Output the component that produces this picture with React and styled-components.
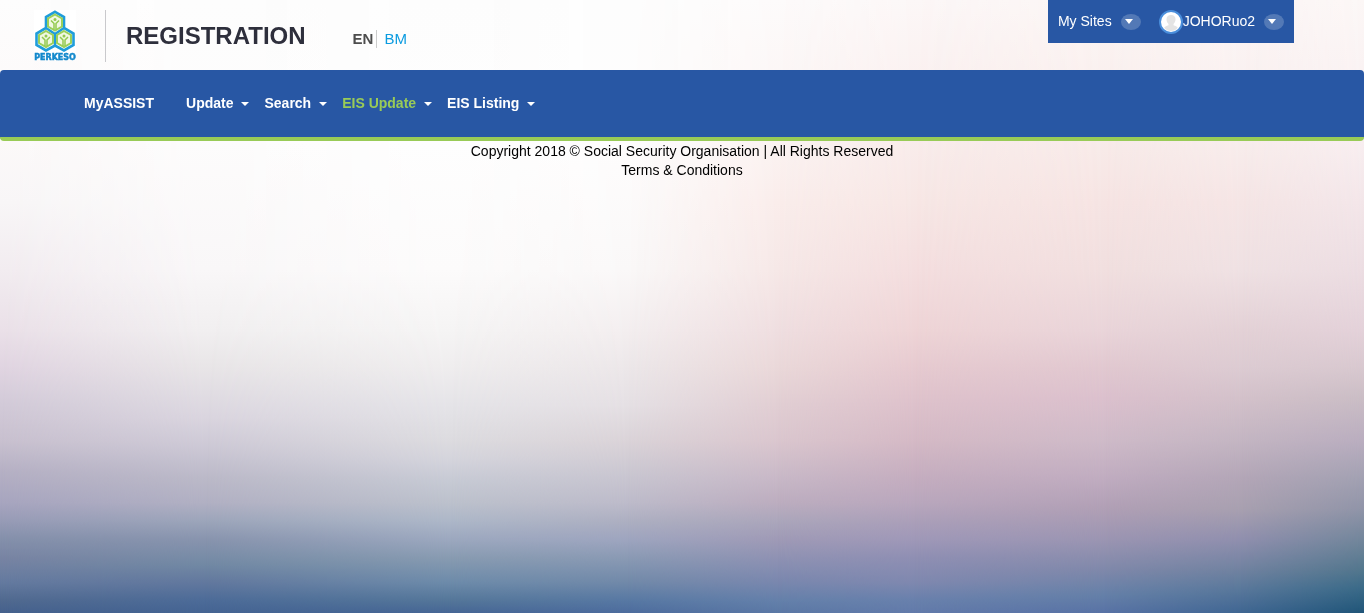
import React from "react";
import styled, { createGlobalStyle } from "styled-components";

const GlobalStyle = createGlobalStyle`
  *, *::before, *::after { box-sizing: border-box; }
  body {
    margin: 0;
    font-family: "Liberation Sans", Arial, sans-serif;
    font-size: 14px;
    line-height: 19px;
    color: #000;
  }
  a { color: inherit; text-decoration: none; }
  button {
    font: inherit;
    color: inherit;
    background: none;
    border: 0;
    padding: 0;
    cursor: pointer;
  }
`;

/* Vertical colour runs of the backdrop; each one fades in over the run to its left. */
const bands = [
  { from: 0, to: 0, stops: "#fdfdfd 0%, #fcf9f9 23%, #f8f6f7 33%, #f2ecf0 44%, #eae0e8 54%, #e0d4e1 60%, #d2cad8 66%, #c8c0cf 72%, #b5b0c4 77%, #a7a5bf 82%, #979bb6 85%, #8490ab 88%, #7884a3 91%, #647a9f 95%, #50698f 98%, #45618d 100%" },
  { from: 0, to: 15, stops: "#fdfdfd 0%, #fdfcfc 23%, #f9f7f8 44%, #f1eff0 54%, #e8e5e7 60%, #dad5df 68%, #ccc8d5 73%, #bbb9c8 78%, #b1b0c3 82%, #9ca5ba 85%, #8894ae 88%, #7289a4 92%, #62789e 95%, #4c6b98 98%, #456492 100%" },
  { from: 15, to: 33, stops: "#fdfdfd 0%, #fefefe 23%, #fcfbfb 44%, #f5f4f4 54%, #efedee 60%, #e5e4e8 66%, #dcdbdf 72%, #d4d4dc 75%, #c8cbd5 78%, #bcc1cc 82%, #adb7c8 85%, #9ca8bf 88%, #889bb1 91%, #6d8baa 95%, #547699 98%, #466695 100%" },
  { from: 33, to: 46, stops: "#fdfdfd 0%, #fefdfd 23%, #faf8f8 44%, #f3eeef 54%, #ece7e9 60%, #e5e0e4 66%, #dad3d8 72%, #c8c5d0 78%, #bdbbca 82%, #adafc1 85%, #9ea5bf 88%, #8a9ab4 91%, #7189a9 95%, #5778a3 98%, #4d6c9d 100%" },
  { from: 46, to: 57, stops: "#fdfbfb 0%, #fbf3f2 23%, #faedeb 33%, #f6e8e7 44%, #efdee0 54%, #ead8d9 60%, #e1ced3 66%, #dac6ce 72%, #c8b8c7 78%, #bcadbf 82%, #aba6bb 85%, #9f9ab6 88%, #8f92b3 91%, #7987ae 95%, #6480aa 98%, #5b78a5 100%" },
  { from: 57, to: 67, stops: "#fcf7f7 0%, #f9eceb 23%, #f7e7e5 33%, #f4dedf 44%, #eed4d6 54%, #e6cad0 60%, #ddc1cb 66%, #d4b9c5 72%, #c4adbf 78%, #b9a7bd 82%, #ab9fb9 85%, #9f98b8 88%, #8f8fb3 91%, #7f88af 95%, #6880ac 98%, #627aaa 100%" },
  { from: 67, to: 81, stops: "#fcf6f5 0%, #f8ebe9 23%, #f6e4e3 33%, #f1dfdf 44%, #e9d4d9 54%, #e1c8d0 60%, #dbc0cd 65%, #cebac8 72%, #c0acc0 78%, #b09fb5 83%, #9b95b2 88%, #7f88aa 93%, #6580a8 97%, #5872a5 100%" },
  { from: 81, to: 91, stops: "#fcf6f6 0%, #f8edec 23%, #f5e5e5 33%, #efe1e3 44%, #e3d1d6 54%, #dccbd2 60%, #d3c1ca 65%, #c3b5c2 72%, #b3a6b7 78%, #a8a0b0 83%, #908fae 88%, #7082a0 93%, #5a789b 96%, #3f6692 100%" },
  { from: 91, to: 100, stops: "#fcf7f6 0%, #f8eef0 23%, #f3e6e9 33%, #ecdde2 44%, #e3d1d9 54%, #d8c8cf 60%, #cabdc5 65%, #b9adbf 72%, #a2a1b2 78%, #9094a8 83%, #72869b 88%, #52768d 93%, #3a6a88 96%, #205578 100%" },
];

const Backdrop = styled.div`
  position: fixed;
  inset: 0;
  z-index: -1;
  display: grid;
`;

const Band = styled.div`
  grid-area: 1 / 1;
  background: linear-gradient(to bottom, ${(p) => p.$stops});
  ${(p) =>
    p.$to > 0 &&
    `mask-image: linear-gradient(to right, transparent ${p.$from}%, #000 ${p.$to}%);`}
`;

const Header = styled.header`
  display: flex;
  align-items: flex-start;
  height: 70px;
  padding: 0 70px 0 34px;
`;

const LogoLink = styled.a`
  display: flex;
  height: 52px;
  margin-top: 10px;
  padding-right: 29px;
  border-right: 1px solid #c9c9cc;
`;

const Title = styled.h1`
  margin: 20px 0 0 20px;
  font-size: 24px;
  line-height: 32px;
  color: #2e2f3c;
`;

const Languages = styled.div`
  display: flex;
  margin: 30px 0 0 47px;
  font-size: 15px;
  line-height: 18px;
`;

const CurrentLanguage = styled.strong`
  padding-right: 3px;
  border-right: 1px solid #ccc;
  color: #4d4d4d;
`;

const LanguageLink = styled.a`
  padding-left: 7px;
  color: #0a9be0;
`;

const UserBar = styled.div`
  display: flex;
  align-items: center;
  gap: 18px;
  height: 43px;
  margin-left: auto;
  padding: 0 10px;
  background: #2857a4;
  color: #fff;
`;

const UserButton = styled.button`
  display: flex;
  align-items: center;
`;

const Caret = styled.span`
  border: 4px solid transparent;
  border-top-color: #fff;
  border-bottom: 0;
`;

const Pill = styled.span`
  display: flex;
  align-items: center;
  justify-content: center;
  width: 20px;
  height: 16px;
  margin-left: 9px;
  padding-right: 4px;
  border-radius: 50%;
  background: #5379b6;

  ${Caret} {
    border-width: 5px 4px 0;
  }
`;

const Nav = styled.nav`
  display: flex;
  align-items: flex-start;
  height: 71px;
  padding: 24px 84px 0;
  border-bottom: 4px solid #99cb57;
  border-radius: 4px;
  background: #2857a4;
  color: #fff;
  font-weight: bold;
`;

const HomeLink = styled.a`
  margin-right: 32px;
`;

const NavButton = styled.button`
  display: flex;
  align-items: center;
  gap: 8px;
  margin-right: 15px;
  color: ${(p) => (p.$active ? "#99cb57" : "inherit")};
`;

const Footer = styled.footer`
  display: flex;
  flex-direction: column;
  align-items: center;
  padding-top: 1px;
`;

function Cell({ x, y }) {
  return (
    <g transform={`translate(${x} ${y})`}>
      <path d="M0-8 7-4V4L0 8-7 4V-4Z" fill="#f1f8e2" stroke="#9bd05a" strokeWidth="2" />
      <path d="M-4-2-1 1V7M4-2 1 1V7" fill="none" stroke="#93c94f" strokeWidth="1.500" />
      <circle cy="-3" r="1.500" fill="#93c94f" />
    </g>
  );
}

function Logo() {
  return (
    <svg width="42" height="52" viewBox="0 0 42 52" role="img" aria-label="PERKESO">
      <rect width="42" height="50" fill="#fff" />
      <path
        d="M21 1.800 30 7V18L39.500 23.500V35L30 40.500 21 35.500 12 40.500 2.500 35V23.500L12 18V7ZM21 35.500V24M12 18 21 24 30 18"
        fill="#fff"
        stroke="#1f9dda"
        strokeWidth="2.600"
      />
      <Cell x="21" y="12.500" />
      <Cell x="12" y="29" />
      <Cell x="30" y="29" />
      <text
        x="21"
        y="50"
        textAnchor="middle"
        fontFamily="DejaVu Sans, sans-serif"
        fontWeight="bold"
        fontSize="8"
        fill="#1489cc"
        stroke="#1489cc"
        strokeWidth="0.500"
      >
        PERKESO
      </text>
    </svg>
  );
}

function Avatar() {
  return (
    <svg width="24" height="24" viewBox="0 0 24 24" aria-hidden="true">
      <circle cx="12" cy="12" r="11" fill="#fff" stroke="#4a8edb" strokeWidth="2" />
      <path d="M12 5c-3 0-4.500 1.800-4.500 4.300 0 2 .8 3.600 2 4.600v1.300c-2 .8-3.500 1.300-4.300 2.500A9 9 0 0 0 12 21a9 9 0 0 0 6.800-3.300c-.8-1.200-2.300-1.700-4.300-2.500v-1.300c1.200-1 2-2.600 2-4.600C16.500 6.800 15 5 12 5Z" fill="#e4e4e4" />
    </svg>
  );
}

const menus = [
  { label: "Update" },
  { label: "Search" },
  { label: "EIS Update", active: true },
  { label: "EIS Listing" },
];

export default function App() {
  return (
    <>
      <GlobalStyle />
      <Backdrop aria-hidden="true">
        {bands.map((b) => (
          <Band key={b.to} $from={b.from} $to={b.to} $stops={b.stops} />
        ))}
      </Backdrop>
      <Header>
        <LogoLink href="#">
          <Logo />
        </LogoLink>
        <Title>REGISTRATION</Title>
        <Languages>
          <CurrentLanguage>EN</CurrentLanguage>
          <LanguageLink href="#bm">BM</LanguageLink>
        </Languages>
        <UserBar>
          <UserButton type="button">
            My Sites
            <Pill><Caret /></Pill>
          </UserButton>
          <UserButton type="button">
            <Avatar />
            JOHORuo2
            <Pill><Caret /></Pill>
          </UserButton>
        </UserBar>
      </Header>
      <Nav>
        <HomeLink href="#myassist">MyASSIST</HomeLink>
        {menus.map((m) => (
          <NavButton key={m.label} type="button" $active={m.active}>
            {m.label}
            <Caret />
          </NavButton>
        ))}
      </Nav>
      <Footer>
        <span>Copyright 2018 © Social Security Organisation | All Rights Reserved</span>
        <a href="#terms">Terms &amp; Conditions</a>
      </Footer>
    </>
  );
}
